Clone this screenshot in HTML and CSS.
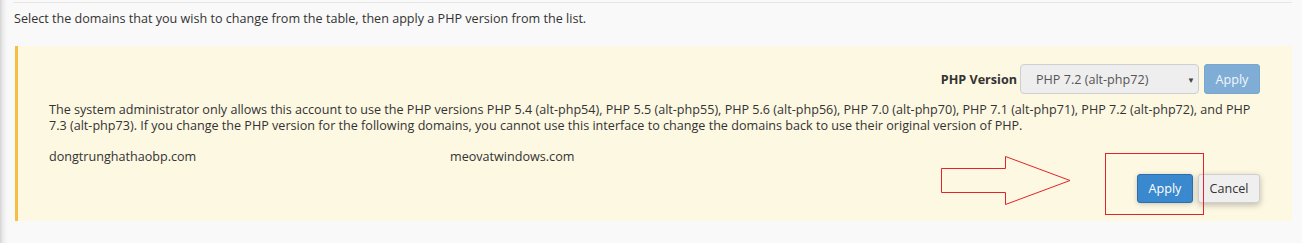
FILE: index.html
```html
<!DOCTYPE html>
<html>
<head>
<meta charset="utf-8">
<link rel="stylesheet" href="styles.css">
</head>
<body>
<div class="page">
  <div class="rule"></div>
  <p class="intro">Select the domains that you wish to change from the table, then apply a PHP version from the list.</p>
  <div class="alert">
    <div class="toolbar">
      <label class="label">PHP Version</label>
      <div class="select"><span>PHP 7.2 (alt-php72)</span><span class="caret">&#9660;</span></div>
      <button class="btn btn-disabled">Apply</button>
    </div>
    <p class="notice">The system administrator only allows this account to use the PHP versions PHP 5.4 (alt-php54), PHP 5.5 (alt-php55), PHP 5.6 (alt-php56), PHP 7.0 (alt-php70), PHP 7.1 (alt-php71), PHP 7.2 (alt-php72), and PHP 7.3 (alt-php73). If you change the PHP version for the following domains, you cannot use this interface to change the domains back to use their original version of PHP.</p>
    <div class="domains">
      <div>dongtrunghathaobp.com</div>
      <div>meovatwindows.com</div>
    </div>
    <div class="actions">
      <button class="btn btn-primary">Apply</button>
      <button class="btn btn-default">Cancel</button>
    </div>
  </div>
</div>
<svg class="annot" width="1302" height="243" viewBox="0 0 1302 243">
  <polygon points="941.5,168.5 1005.5,168.5 1005.5,156.5 1070,180.5 1005.5,204.5 1005.5,192.5 941.5,192.5" fill="none" stroke="#e3232b" stroke-width="1"/>
  <rect x="1105.5" y="153.5" width="98" height="61" fill="none" stroke="#e3232b" stroke-width="1"/>
</svg>
</body>
</html>
```
FILE: styles.css
```css
html, body {
  margin: 0;
  padding: 0;
}
body {
  position: relative;
  width: 1302px;
  height: 243px;
  overflow: hidden;
  background: linear-gradient(to right, #d4d4d4 0px, #ececec 3px, #f8f8f8 7px, #f9f9f9 10px);
  font-family: "Open Sans", "Liberation Sans", sans-serif;
  font-size: 12.6px;
  color: #333;
}
.page {
  padding: 2px 10px 0 13px;
}
.rule {
  height: 1px;
  background: #e6e6e6;
}
.intro {
  margin: 7px 0 0 1px;
  line-height: 18px;
}
.alert {
  margin: 18px 0 0 2px;
  height: 175px;
  box-sizing: border-box;
  background: #fdf8e2;
  border-left: 3px solid #f6bf43;
  padding: 18px 32px 0 31px;
}
.toolbar {
  display: flex;
  justify-content: flex-end;
  align-items: center;
}
.label {
  font-weight: bold;
  margin-right: 3px;
}
.select {
  width: 179px;
  height: 30px;
  box-sizing: border-box;
  border: 1px solid #cfcfcf;
  border-radius: 4px;
  background: #eeeeee;
  color: #555;
  display: flex;
  align-items: center;
  justify-content: space-between;
  padding: 0 3px 0 15px;
  margin-right: 5px;
}
.caret {
  font-size: 8px;
  color: #444;
}
.btn {
  font-family: inherit;
  font-size: 12.6px;
  box-sizing: border-box;
  border-radius: 3px;
  border: 1px solid transparent;
  padding: 0;
  margin: 0;
}
.btn-disabled {
  width: 56px;
  height: 30px;
  background: #7fadd5;
  border-color: #78a6cf;
  color: #f2f7fb;
}
.notice {
  margin: 8px 0 0 0;
  line-height: 16px;
}
.domains {
  display: grid;
  grid-template-columns: 401px 401px 1fr;
  margin-top: 15px;
  line-height: 16px;
}
.actions {
  display: flex;
  justify-content: flex-end;
  gap: 5px;
  margin-top: 9px;
}
.btn-primary {
  width: 56px;
  height: 29px;
  background: #3a88cd;
  border-color: #2d6fae;
  color: #fff;
  box-shadow: 0 1px 5px rgba(0, 0, 0, 0.2);
}
.btn-default {
  width: 62px;
  height: 29px;
  background: #efefef;
  border-color: #cfcfcf;
  color: #333;
  box-shadow: 0 2px 6px rgba(0, 0, 0, 0.25);
}
.annot {
  position: absolute;
  top: 0;
  left: 0;
  pointer-events: none;
}
```
